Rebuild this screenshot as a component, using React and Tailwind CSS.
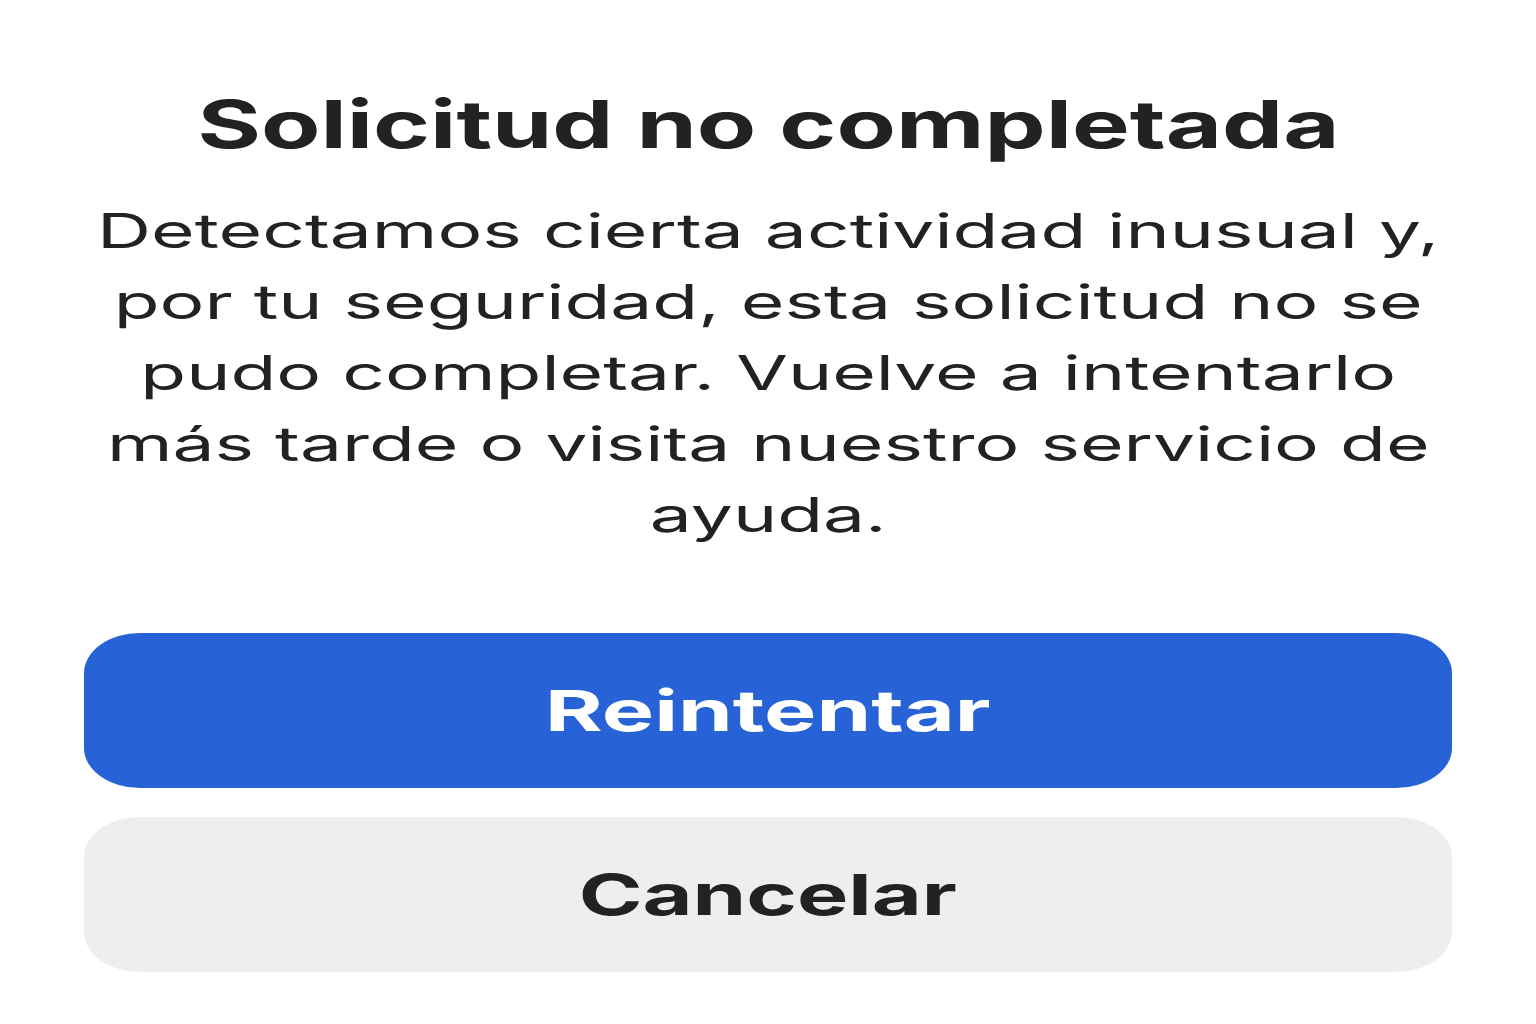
export default function App() {
  return (
    <div
      className="min-h-screen w-full bg-white flex flex-col items-center px-[84px] pt-[84px] text-[#222222]"
      style={{ fontFamily: "Inter, 'Liberation Sans', sans-serif" }}
    >
      <h1 className="text-[66px] leading-[80px] font-bold whitespace-nowrap scale-x-[1.47] origin-center">
        Solicitud no completada
      </h1>
      <p className="mt-[31px] text-[48px] leading-[71px] font-normal text-center whitespace-nowrap scale-x-[1.56] origin-center">
        Detectamos cierta actividad inusual y,
        <br />
        por tu seguridad, esta solicitud no se
        <br />
        pudo completar. Vuelve a intentarlo
        <br />
        más tarde o visita nuestro servicio de
        <br />
        ayuda.
      </p>
      <div className="mt-[83px] w-full flex flex-col gap-[29px]">
        <button className="h-[155px] w-full rounded-[56px/40px] bg-[#2763d6] flex items-center justify-center">
          <span className="text-[56px] font-bold text-white scale-x-[1.57] origin-center">Reintentar</span>
        </button>
        <button className="h-[155px] w-full rounded-[56px/40px] bg-[#eeeeee] flex items-center justify-center">
          <span className="text-[56px] font-bold text-[#222222] scale-x-[1.54] origin-center">Cancelar</span>
        </button>
      </div>
    </div>
  );
}
